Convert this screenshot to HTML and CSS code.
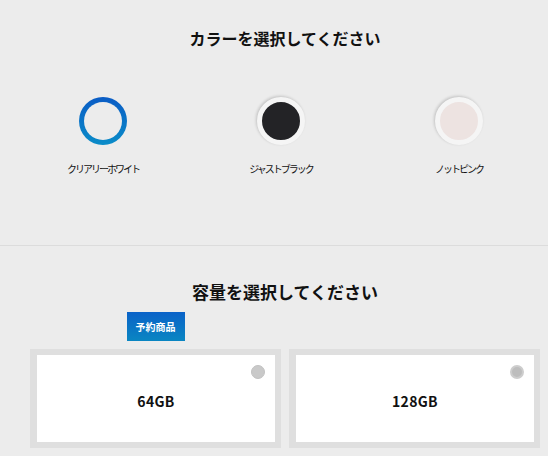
FILE: index.html
```html
<!DOCTYPE html>
<html lang="ja">
<head>
<meta charset="utf-8">
<link rel="stylesheet" href="styles.css">
</head>
<body>
<section class="colors">
  <h2 class="title">カラーを選択してください</h2>
  <div class="color-grid">
    <div class="color-item">
      <div class="swatch swatch-white"></div>
      <div class="label">クリアリーホワイト</div>
    </div>
    <div class="color-item">
      <div class="swatch swatch-black"></div>
      <div class="label">ジャストブラック</div>
    </div>
    <div class="color-item">
      <div class="swatch swatch-pink"></div>
      <div class="label">ノットピンク</div>
    </div>
  </div>
</section>
<section class="capacity">
  <h2 class="title title-cap">容量を選択してください</h2>
  <div class="cap-grid">
    <div class="badge">予約商品</div>
    <div class="card"><span class="radio"></span><span class="cap">64GB</span></div>
    <div class="card"><span class="radio radio-alt"></span><span class="cap">128GB</span></div>
  </div>
</section>
</body>
</html>
```
FILE: styles.css
```css
html, body {
  margin: 0;
  padding: 0;
}
body {
  background: #ececec;
  font-family: "Noto Sans CJK JP", "Noto Sans", sans-serif;
  color: #111;
  width: 548px;
  height: 456px;
  overflow: hidden;
}
.title {
  margin: 0;
  padding-left: 22px;
  text-align: center;
  font-size: 16px;
  line-height: 20px;
  font-weight: 700;
}
.colors {
  padding-top: 28px;
  height: 246px;
  box-sizing: border-box;
  border-bottom: 1px solid #dcdcdc;
}
.color-grid {
  margin-top: 49px;
  padding-left: 14px;
  display: grid;
  grid-template-columns: 178px 178px 178px;
}
.color-item {
  display: flex;
  flex-direction: column;
  align-items: center;
}
.swatch {
  width: 48px;
  height: 48px;
  border-radius: 50%;
  box-sizing: border-box;
  position: relative;
}
.swatch-white {
  background: linear-gradient(#0a5cc5, #0a8cc8);
}
.swatch-white::after {
  content: "";
  position: absolute;
  inset: 5px;
  border-radius: 50%;
  background: #ececec;
}
.swatch-black {
  background: #232326;
  border: 5px solid #f5f5f5;
  box-shadow: -1px -1px 3px rgba(0,0,0,0.18);
}
.swatch-pink {
  background: #ede3e1;
  border: 5px solid #f5f5f5;
  box-shadow: -1px -1px 3px rgba(0,0,0,0.18);
}
.label {
  margin-top: 17px;
  font-size: 10px;
  letter-spacing: -2px;
  line-height: 14px;
  color: #111;
}
.capacity {
  padding-top: 36px;
}
.title-cap {
  font-size: 17px;
}
.cap-grid {
  margin-top: 10px;
  padding: 0 8px 0 30px;
  display: grid;
  grid-template-columns: 251px 251px;
  column-gap: 8px;
  row-gap: 8px;
}
.badge {
  grid-column: 1;
  grid-row: 1;
  justify-self: center;
  width: 58px;
  height: 29px;
  display: flex;
  align-items: center;
  justify-content: center;
  background: linear-gradient(#0a62c8, #0a86c2);
  color: #fff;
  font-size: 10px;
  font-weight: 700;
}
.card {
  grid-row: 2;
  position: relative;
  height: 99px;
  box-sizing: border-box;
  border: 6px solid #dfdfdf;
  border-left-width: 7px;
  background: #fff;
  display: flex;
  align-items: center;
  justify-content: center;
  padding-top: 5px;
}
.cap {
  font-size: 14px;
  font-weight: 700;
  color: #111;
  letter-spacing: 0.3px;
}
.radio {
  position: absolute;
  top: 10px;
  right: 10px;
  width: 14px;
  height: 14px;
  border-radius: 50%;
  background: #c9c9c9;
  box-sizing: border-box;
  border: 1px solid #c2c2c2;
}
.radio-alt {
  background: #bdbdbd;
  border: 2px solid #cdcdcd;
}
```
